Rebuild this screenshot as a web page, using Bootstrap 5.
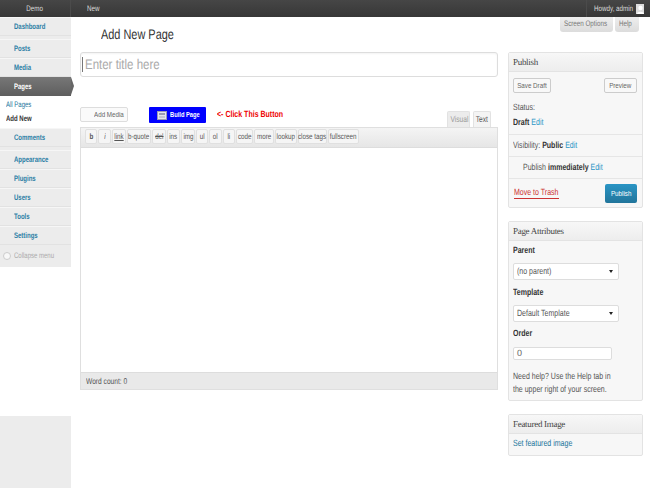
<!DOCTYPE html>
<html lang="en"><head><meta charset="utf-8"><title>Add New Page</title>
<link href="https://cdn.jsdelivr.net/npm/bootstrap@5.3.0/dist/css/bootstrap.min.css" rel="stylesheet">
<style>
html,body{height:488px;overflow:hidden}
body{font:9px/1.2 "Liberation Sans",Arial,sans-serif;color:#333;background:#fff;text-rendering:geometricPrecision}
a{text-decoration:none;color:#21759b}
.nx{display:inline-block;white-space:nowrap;transform:scaleX(.78);transform-origin:0 50%}
.nx-c{transform-origin:50% 50%}
.nx-r{transform-origin:100% 50%}
.adminbar{height:17px;background:linear-gradient(#464646,#373737);color:#ddd;font-size:8px}
.bar-demo{width:71px;text-align:center;border-right:1px solid #4b4b4b;height:17px;line-height:17px}
.bar-new{padding-left:16px;line-height:17px}
.bar-user{width:64px;padding-right:6px;line-height:17px;border-left:1px solid #4b4b4b;gap:3px}
.bar-ava{width:8px;height:10px;background:#ddd;display:flex;align-items:flex-end;justify-content:center;flex:none}
.shell{height:471px}
.side{width:71px;height:471px;background:#ececec;flex:none;font-size:8px}
.side .nx{transform:scaleX(.75)}
.side-item{display:block;height:19px;line-height:17px;padding-left:14px;color:#2b7ea5;font-weight:700;background:#ececec;border-bottom:1px solid #e2e2e2;border-top:1px solid #f6f6f6}
.side-gap{height:3px;background:#ececec}
.side-item.cur{background:linear-gradient(#777,#5e5e5e);color:#fff;position:relative;border:0;line-height:19px}
.side-item.cur::after{content:"";position:absolute;left:100%;top:0;border-left:3px solid #666;border-top:9.5px solid transparent;border-bottom:9.5px solid transparent}
.side-sub{background:#fff;height:32px;padding:2px 0 0 6px;line-height:14px}
.side-sub a{display:block}
.side-sub .on{color:#333;font-weight:700}
.collapse-row{height:22px;color:#aaa;padding-left:3px;gap:3px;background:#ececec}
.collapse-dot{width:8px;height:8px;border-radius:50%;background:#f8f8f8;border:1px solid #ccc;flex:none}
.side-blank{height:149px;background:#fff}
.side-rest{height:72px;background:#ececec}
.work{width:579px;padding-left:9px;flex:none;position:relative}
.main-col{width:418px;flex:none}
.right-col{width:135px;flex:none;margin-left:10px;padding-top:35px}
.scr-tabs{position:absolute;right:11px;top:0;gap:2px}
.scr-tab{height:15px;line-height:14px;padding-left:4px;background:linear-gradient(#eee,#dcdcdc);border-radius:0 0 3px 3px;color:#777;font-size:8px}
.scr-a{width:53px}.scr-b{width:24px}
.ttl{font-size:14px;line-height:17px;color:#333;padding:9px 0 9px 21px;margin:0;font-weight:400}
.title-inp{height:25px;border:1px solid #ddd;border-radius:3px;font-size:14px;line-height:23px;padding:0 1px;color:#aaa;box-shadow:inset 0 1px 2px rgba(0,0,0,.05);gap:2px}
.title-inp .nx{transform:scaleX(.82)}
.caret-bar{width:1px;height:15px;background:#777;flex:none}
.media-row{height:50px;padding-top:30px;align-items:flex-start}
.b-media{height:15px;width:48px;padding:0 0 0 13px;font-size:8px;line-height:13px;background:#fafafa;border:1px solid #ddd;color:#666;border-radius:2px;text-align:left}
.b-build{height:16px;width:57px;margin-left:21px;background:#00f;border:0;border-radius:1px;color:#fff;font-size:8px;font-weight:700;line-height:16px;gap:3px;padding:0 0 0 8px}
.b-build .nx{transform:scaleX(.72)}
.b-ic{display:block;flex:none}
.click-note{margin-left:11px;color:#e00;font-weight:700;line-height:15px}
.tabs-r{margin-left:auto;gap:3px;align-self:flex-end;padding-right:7px}
.tb-tab{height:16px;line-height:15px;text-align:center;background:#ececec;color:#999;border:1px solid #e2e2e2;border-bottom:0;border-radius:2px 2px 0 0;font-size:8.5px}
.tb-v{width:23px}
.tb-t{width:18px;background:#f4f4f4;color:#555}
.editor{border:1px solid #dfdfdf}
.toolbar{height:20px;background:linear-gradient(#f4f4f4,#e6e6e6);border-bottom:1px solid #ddd;gap:1px;padding:1px 0 0 4px;display:grid;grid-template-columns:12px 13px 14px 24px 14px 13px 14px 12px 13px 12px 17px 20px 22px 29px 31px;grid-template-rows:15px}
.q{text-align:center;font-size:8px;line-height:13px;border:1px solid #e0e0e0;background:#f5f5f5;border-radius:2px;color:#555;display:flex;justify-content:center}
.edit-area{height:224px;background:#fff}
.wc{height:17px;background:#e9e9e9;line-height:16px;padding-left:5px;color:#555;font-size:8.5px;border-top:1px solid #ddd}
.box{border:1px solid #e3e3e3;border-radius:2px;background:#f7f7f7}
.box-h{height:19px;padding-left:4px;font:9px/18px "Liberation Serif",serif;color:#464646;background:linear-gradient(#f7f7f7,#ededed);border-bottom:1px solid #e3e3e3;letter-spacing:-.3px}
.pub-btn{height:15px;padding:0;font-size:8px;line-height:13px;border:1px solid #ccc;background:#f8f8f8;color:#666;border-radius:2px;display:flex;justify-content:center}
.pb-a{width:38px}.pb-b{width:33px}
.p1{height:24px;padding:6px 5px 0 4px}
.p-status{padding:4px 4px 0;height:38px;line-height:15px;color:#555}
.p-row{height:22px;line-height:21px;padding-left:4px;border-top:1px solid #e6e6e6;color:#555}
.p-row b,.p-status b{color:#333}
.p-row a,.p-status a{color:#2a95c5}
.p-row.ind{padding-left:14px}
.p-foot{height:29px;border-top:1px solid #e6e6e6;padding:5px 5px 0 5px;align-items:flex-start}
.trash{color:#c33;border-bottom:1px solid #c33;line-height:11px;margin-top:3px;display:block;width:45px}
.pub-main{width:32px;height:19px;padding:0;font-size:8px;line-height:19px;color:#fff;background:linear-gradient(#2a95c5,#21759b);border:0;border-radius:2px;display:flex;justify-content:center}
.attr{padding:4px 4px 0;height:159px;color:#333}
.lab{display:block;font-weight:700;line-height:10px;margin:0}
.sel{width:106px;height:17px;padding:0 3px;border:1px solid #ddd;border-radius:2px;background:#fff;color:#555;display:flex;align-items:center;justify-content:space-between;margin:8px 0 7px}
.sel i{width:0;height:0;border-left:2px solid transparent;border-right:2px solid transparent;border-top:3px solid #222;margin-right:2px;flex:none}
.sel.s2{margin-bottom:6px}
.num{width:99px;height:13px;padding:0 3px;border:1px solid #ddd;border-radius:2px;color:#666;background:#fff;margin:9px 0 10px;line-height:11px}
.hlp{color:#555;line-height:13px;margin:0;width:137px;transform:scaleX(.78);transform-origin:0 50%}
.gap1{margin-top:13px}
.feat{height:21px;padding:4px;color:#21759b}
</style></head><body>
<div class="adminbar d-flex align-items-center">
 <div class="bar-demo"><span class="nx nx-c">Demo</span></div><div class="bar-new"><span class="nx">New</span></div>
 <div class="ms-auto d-flex align-items-center justify-content-end bar-user"><span class="nx nx-r">Howdy, admin</span><span class="bar-ava"><svg width="7" height="10" viewBox="0 0 7 10"><circle cx="3.5" cy="4" r="2.2" fill="#fff"/><path d="M0 10c0-3 7-3 7 0z" fill="#fff"/></svg></span></div>
</div>
<div class="shell d-flex">
 <nav class="side">
  <a class="side-item" href="#"><span class="nx">Dashboard</span></a><div class="side-gap"></div>
  <a class="side-item" href="#"><span class="nx">Posts</span></a><a class="side-item" href="#"><span class="nx">Media</span></a>
  <a class="side-item cur" href="#"><span class="nx">Pages</span></a>
  <div class="side-sub"><a href="#"><span class="nx">All Pages</span></a><a class="on" href="#"><span class="nx">Add New</span></a></div>
  <a class="side-item" href="#"><span class="nx">Comments</span></a><div class="side-gap"></div>
  <a class="side-item" href="#"><span class="nx">Appearance</span></a><a class="side-item" href="#"><span class="nx">Plugins</span></a><a class="side-item" href="#"><span class="nx">Users</span></a><a class="side-item" href="#"><span class="nx">Tools</span></a><a class="side-item" href="#"><span class="nx">Settings</span></a>
  <div class="collapse-row d-flex align-items-center"><span class="collapse-dot"></span><span class="nx">Collapse menu</span></div>
  <div class="side-blank"></div><div class="side-rest"></div>
 </nav>
 <div class="work d-flex">
  <div class="scr-tabs d-flex"><div class="scr-tab scr-a"><span class="nx">Screen Options</span></div><div class="scr-tab scr-b"><span class="nx">Help</span></div></div>
  <div class="main-col">
   <h1 class="ttl"><span class="nx">Add New Page</span></h1>
   <div class="title-inp d-flex align-items-center"><span class="caret-bar"></span><span class="nx">Enter title here</span></div>
   <div class="media-row d-flex">
    <button class="btn b-media" type="button"><span class="nx">Add Media</span></button>
    <button class="btn b-build d-flex align-items-center" type="button"><svg class="b-ic" width="10" height="9" viewBox="0 0 10 9"><rect width="10" height="9" fill="#e4e4ee"/><rect x=".5" y=".5" width="9" height="8" fill="none" stroke="#9a9ab4"/><rect x="2" y="2" width="6" height="2" fill="#9a9ab4"/><rect x="2" y="5" width="6" height="2" fill="#c4c4d4"/></svg><span class="nx">Build Page</span></button>
    <span class="click-note"><span class="nx">&lt;- Click This Button</span></span>
    <div class="tabs-r d-flex"><span class="tb-tab tb-v"><span class="nx nx-c">Visual</span></span><span class="tb-tab tb-t"><span class="nx nx-c">Text</span></span></div>
   </div>
   <div class="editor">
    <div class="toolbar">
     <span class="q fw-bold"><span class="nx nx-c">b</span></span><span class="q fst-italic"><span class="nx nx-c">i</span></span><span class="q text-decoration-underline"><span class="nx nx-c">link</span></span><span class="q"><span class="nx nx-c">b-quote</span></span><span class="q"><span class="nx nx-c text-decoration-line-through">del</span></span><span class="q"><span class="nx nx-c">ins</span></span><span class="q"><span class="nx nx-c">img</span></span><span class="q"><span class="nx nx-c">ul</span></span><span class="q"><span class="nx nx-c">ol</span></span><span class="q"><span class="nx nx-c">li</span></span><span class="q"><span class="nx nx-c">code</span></span><span class="q"><span class="nx nx-c">more</span></span><span class="q"><span class="nx nx-c">lookup</span></span><span class="q"><span class="nx nx-c">close tags</span></span><span class="q"><span class="nx nx-c">fullscreen</span></span>
    </div>
    <div class="edit-area"></div>
    <div class="wc"><span class="nx">Word count: 0</span></div>
   </div>
  </div>
  <div class="right-col">
   <div class="box">
    <div class="box-h">Publish</div>
    <div class="p1 d-flex justify-content-between align-items-start"><button class="btn pub-btn pb-a" type="button"><span class="nx nx-c">Save Draft</span></button><button class="btn pub-btn pb-b" type="button"><span class="nx nx-c">Preview</span></button></div>
    <div class="p-status"><div><span class="nx">Status:</span></div><div><span class="nx"><b>Draft</b> <a href="#">Edit</a></span></div></div>
    <div class="p-row"><span class="nx">Visibility: <b>Public</b> <a href="#">Edit</a></span></div>
    <div class="p-row ind"><span class="nx">Publish <b>immediately</b> <a href="#">Edit</a></span></div>
    <div class="p-foot d-flex justify-content-between"><a class="trash" href="#"><span class="nx">Move to Trash</span></a><button class="btn pub-main" type="button"><span class="nx nx-c">Publish</span></button></div>
   </div>
   <div class="box gap1">
    <div class="box-h">Page Attributes</div>
    <div class="attr">
     <label class="lab"><span class="nx">Parent</span></label>
     <div class="sel"><span class="nx">(no parent)</span><i></i></div>
     <label class="lab"><span class="nx">Template</span></label>
     <div class="sel s2"><span class="nx">Default Template</span><i></i></div>
     <label class="lab"><span class="nx">Order</span></label>
     <div class="num">0</div>
     <p class="hlp">Need help? Use the Help tab in the upper right of your screen.</p>
    </div>
   </div>
   <div class="box gap1">
    <div class="box-h">Featured Image</div>
    <div class="feat"><a href="#"><span class="nx">Set featured image</span></a></div>
   </div>
  </div>
 </div>
</div>
<script src="https://cdn.jsdelivr.net/npm/bootstrap@5.3.0/dist/js/bootstrap.bundle.min.js"></script>
</body></html>
